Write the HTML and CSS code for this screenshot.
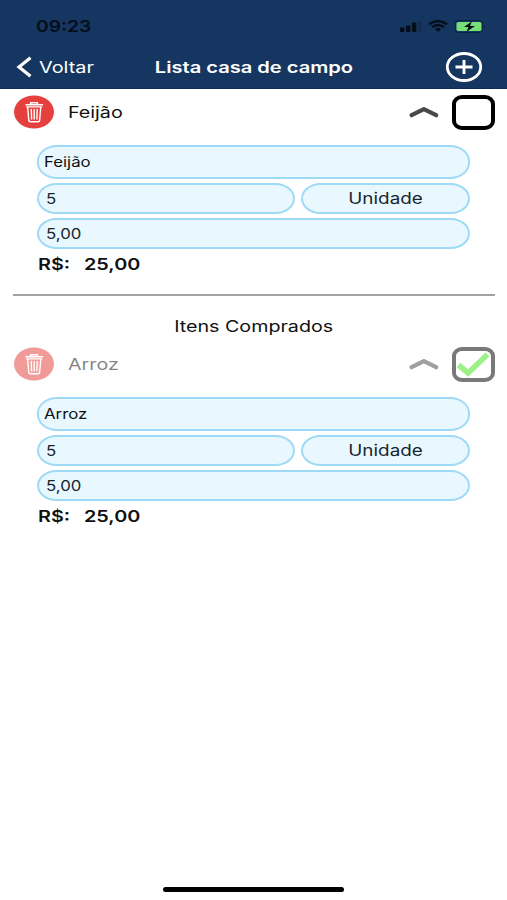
FILE: index.html
```html
<!DOCTYPE html>
<html lang="pt-BR">
<head>
<meta charset="utf-8">
<title>Lista casa de campo</title>
<link rel="stylesheet" href="styles.css">
</head>
<body>
<svg class="defs" width="0" height="0" aria-hidden="true">
  <symbol id="trash" viewBox="0 0 40 34">
    <ellipse cx="20" cy="17" rx="20" ry="16.5" fill="#e5403d"/>
    <g fill="none" stroke="#fff" stroke-width="1.4" stroke-linejoin="round" stroke-linecap="round">
      <path d="M12 9.800h16.500M16.500 9V7.800h7V9M12.700 11.900h15M13.700 12.500l1.100 13.200q.2 1 1.400 1h8q1.200 0 1.400-1l1.100-13.200"/>
      <path d="M17.300 14.500l.3 9.500M20.200 14.500v9.500M23.200 14.500l-.3 9.500"/>
    </g>
  </symbol>
  <symbol id="chevron" viewBox="0 0 30 12">
    <path d="M2.600 9.200L14.900 3.200l12.200 6" fill="none" stroke="#484848" stroke-width="4.200" stroke-linecap="round" stroke-linejoin="round"/>
  </symbol>
</svg>
<div class="screen">
  <header class="top">
    <div class="status">
      <span class="time"><span class="t">09:23</span></span>
      <svg class="indicators" width="86" height="16" viewBox="0 0 86 16">
        <g fill="#050d18">
          <rect x="0" y="9.500" width="4.400" height="4.500" rx="1"/>
          <rect x="6" y="7.500" width="4.400" height="6.500" rx="1"/>
          <rect x="12" y="4.500" width="4.400" height="9.500" rx="1"/>
          <rect x="18.500" y="3" width="3" height="11" rx="1" opacity=".18"/>
          <path d="M35 11q3-2.400 6 0l-3 3z"/>
        </g>
        <path d="M29 6.300q9-6.600 18 0M32 9.200q6-4.500 12 0" fill="none" stroke="#050d18" stroke-width="2.300"/>
        <rect x="55.500" y="2.500" width="27" height="12" rx="3" fill="none" stroke="#0c2443"/>
        <rect x="56.500" y="4" width="25" height="9" rx="1.800" fill="#75df78"/>
        <path d="M84 6.500q2 2 0 4z" fill="#0c2443"/>
        <path d="M72 3.200L64 9h4.500l-2 4.800L75 8h-5z" fill="#050d18"/>
      </svg>
    </div>
    <nav class="nav">
      <a class="back">
        <svg width="18" height="24" viewBox="0 0 18 24"><path d="M15.500 2.800L4 12l11.500 9.200" fill="none" stroke="#fff" stroke-width="3.200"/></svg>
        <span class="t voltar">Voltar</span>
      </a>
      <h1 class="title"><span class="t">Lista casa de campo</span></h1>
      <svg class="add" width="38" height="32" viewBox="0 0 38 32">
        <ellipse cx="19" cy="16" rx="16.700" ry="13.500" fill="none" stroke="#fff" stroke-width="2.800"/>
        <path d="M10.500 16h17M19 9v14" fill="none" stroke="#fff" stroke-width="2.900"/>
      </svg>
    </nav>
  </header>
  <main>
    <section class="item">
      <div class="row">
        <svg class="trash" width="40" height="34"><use href="#trash"/></svg>
        <span class="name"><span class="t">Feijão</span></span>
        <svg class="chev" width="30" height="12"><use href="#chevron"/></svg>
        <span class="check"></span>
      </div>
      <div class="fields">
        <div class="field tall"><span class="t">Feijão</span></div>
        <div class="pair">
          <div class="field qty"><span class="t">5</span></div>
          <div class="field unit"><span class="t">Unidade</span></div>
        </div>
        <div class="field"><span class="t">5,00</span></div>
        <div class="total"><span class="label"><span class="t">R$:</span></span><span class="t">25,00</span></div>
      </div>
    </section>
    <hr class="rule">
    <h2 class="heading"><span class="t">Itens Comprados</span></h2>
    <section class="item">
      <div class="row done">
        <svg class="trash" width="40" height="34"><use href="#trash"/></svg>
        <span class="name"><span class="t">Arroz</span></span>
        <svg class="chev" width="30" height="12"><use href="#chevron"/></svg>
        <span class="check"><svg width="35" height="27" viewBox="0 0 35 27"><path d="M2.500 14l9.500 8L31.500 3.500" fill="none" stroke="#43e71e" stroke-width="5.600"/></svg></span>
      </div>
      <div class="fields">
        <div class="field tall"><span class="t">Arroz</span></div>
        <div class="pair">
          <div class="field qty"><span class="t">5</span></div>
          <div class="field unit"><span class="t">Unidade</span></div>
        </div>
        <div class="field"><span class="t">5,00</span></div>
        <div class="total"><span class="label"><span class="t">R$:</span></span><span class="t">25,00</span></div>
      </div>
    </section>
  </main>
  <div class="home"></div>
</div>
</body>
</html>
```

FILE: styles.css
```css
* { box-sizing: border-box; }
body { margin: 0; background: #fff; color: #111; font: 16px/20px Inter, "Liberation Sans", sans-serif; }
.defs { position: absolute; }
.screen { width: 507px; height: 900px; display: flex; flex-direction: column; overflow: hidden; }
.t { display: inline-block; white-space: nowrap; transform: scaleX(1.2); transform-origin: left center; }

.top { height: 89px; background: #143660; border-bottom: 1px solid #0c2c56; color: #fff; }
.status { height: 48px; padding: 16px 21px 0 36px; display: flex; justify-content: space-between; }
.time { color: #050d18; font-weight: 600; }
.indicators { margin-top: 2px; }
.nav { height: 38px; padding: 0 24px 0 15px; display: grid; grid-template-columns: 119px 1fr 110px; align-items: center; }
.back { display: flex; align-items: center; gap: 6px; }
.voltar { transform: scaleX(1.24); }
.title { margin: 0; font-size: 16px; font-weight: 600; text-align: center; }
.title .t, .heading .t, .unit .t { transform-origin: center; }
.title .t { transform: scaleX(1.255); }
.add { justify-self: end; }

main { flex: 1; }
.row { height: 46px; padding: 0 12px 0 14px; display: flex; align-items: center; }
.name { margin-left: 14px; padding-bottom: 1px; flex: 1; }
.name .t, .heading .t { transform: scaleX(1.23); }
.chev { margin-right: 13px; }
.check { width: 43px; height: 35px; border: 4px solid #000; border-radius: 10px / 9px; display: flex; align-items: center; justify-content: center; }
.done { opacity: .52; }

.fields { padding: 10px 37px 0; display: flex; flex-direction: column; gap: 4px; }
.field { height: 31px; padding: 0 7px; border: 2px solid #9edaf5; border-radius: 20px / 16px; background: #e9f8ff; color: #17262c; font-size: 14px; display: flex; align-items: center; }
.tall { height: 34px; padding-left: 5px; color: #111; }
.pair { display: grid; grid-template-columns: 258px 169px; gap: 6px; }
.unit { justify-content: center; padding-bottom: 1px; font-size: 16px; }
.unit .t { transform: scaleX(1.18); }
.total { height: 22px; padding-left: 1px; font-weight: 600; display: flex; align-items: center; }
.total .t { transform: scaleX(1.24); }
.label { width: 46px; }

.rule { height: 2px; margin: 19px 12px 0 13px; border: 0; background: #a3a3a3; }
.heading { height: 45px; margin: 0; padding-top: 20px; font-size: 16px; font-weight: 400; text-align: center; }
.home { width: 181px; height: 5px; margin: 0 auto 8px; border-radius: 3px; background: #000; }
```
